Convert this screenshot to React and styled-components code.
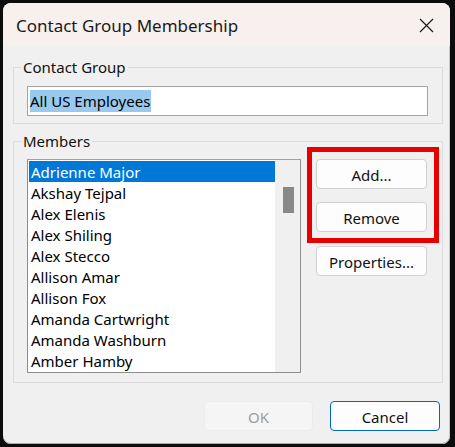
import React from 'react';
import styled, { createGlobalStyle } from 'styled-components';

const Global = createGlobalStyle`
  html, body {
    margin: 0;
    padding: 0;
    background: #0c0c0c;
  }
  body {
    font-family: "Noto Sans", "Open Sans", sans-serif;
    font-size: 15px;
    color: #000;
  }
`;

const Screen = styled.div`
  width: 455px;
  height: 447px;
  padding: 3px;
  box-sizing: border-box;
`;

const Window = styled.div`
  width: 447px;
  height: 441px;
  background: #f0f0f0;
  border-radius: 8px;
  overflow: hidden;
  display: flex;
  flex-direction: column;
  box-shadow: inset 0 -1px 0 #a9a9a9, inset -1px 0 0 #c8c8c8;
`;

const TitleBar = styled.div`
  height: 43px;
  flex: none;
  background: #f8f0ee;
  display: flex;
  align-items: center;
  justify-content: space-between;
  padding: 0 16px 0 13px;
`;

const Title = styled.span`
  font-size: 17px;
  color: #1a1a1a;
  margin-top: 2px;
`;

const Body = styled.div`
  flex: 1;
  display: flex;
  flex-direction: column;
  padding: 11px 7px 0 10px;
`;

const Group = styled.fieldset`
  margin: ${p => p.$top || 0}px 0 0 0;
  border: 1px solid #dcdcdc;
  padding: ${p => p.$pad};
  min-width: 0;
`;

const Legend = styled.legend`
  margin-left: -6px;
  padding: 0 2px;
  line-height: 20px;
  font-size: 15px;
  color: #111;
`;

const NameField = styled.div`
  height: 30px;
  box-sizing: border-box;
  border: 1px solid #a4a4a4;
  background: #fff;
  padding: 2px 2px;
  display: flex;
  align-items: center;
`;

const Selected = styled.span`
  background: #99c9ef;
  line-height: 22px;
  padding-right: 1px;
`;

const MembersRow = styled.div`
  display: flex;
  gap: 15px;
  align-items: flex-start;
`;

const List = styled.div`
  width: 274px;
  height: 214px;
  box-sizing: border-box;
  border: 1px solid #8d8d8d;
  border-top-color: #a0a0a0;
  background: #fff;
  padding: 1px 0 1px 1px;
  display: flex;
`;

const Rows = styled.div`
  width: 246px;
  flex: none;
`;

const Row = styled.div`
  height: 21px;
  box-sizing: border-box;
  line-height: 21px;
  padding: 1px 0 0 2px;
  white-space: nowrap;
  background: ${p => (p.$active ? '#0078d7' : 'transparent')};
  color: ${p => (p.$active ? '#fff' : '#000')};
`;

const ScrollTrack = styled.div`
  flex: 1;
  background: #f0f0f0;
  margin: -1px 0 -1px 0;
  display: flex;
  justify-content: center;
  padding-top: 27px;
`;

const Thumb = styled.div`
  width: 11px;
  height: 26px;
  background: #888;
  margin-left: 1px;
`;

const ButtonColumn = styled.div`
  position: relative;
  display: flex;
  flex-direction: column;
  gap: 13px;
  padding-top: 8px;
`;

const Button = styled.button`
  width: ${p => p.$w || 111}px;
  height: 30px;
  box-sizing: border-box;
  border-radius: 4px;
  border: 1px solid ${p => (p.$focus ? '#0067c0' : p.$disabled ? '#ebebeb' : '#d0d0d0')};
  background: ${p => (p.$disabled ? '#f5f5f5' : '#fdfdfd')};
  color: ${p => (p.$disabled ? '#9d9d9d' : '#111')};
  font-family: inherit;
  font-size: 15px;
  padding: 2px 0 0 0;
  margin-top: ${p => p.$mt || 0}px;
`;

const Highlight = styled.div`
  position: absolute;
  left: -9px;
  top: -4px;
  width: 132px;
  height: 96px;
  box-sizing: border-box;
  border: 5px solid #e80000;
  pointer-events: none;
`;

const Footer = styled.div`
  display: flex;
  justify-content: flex-end;
  gap: 17px;
  padding: 18px 3px 0 0;
`;

const CloseIcon = () => (
  <svg width="15" height="15" viewBox="0 0 15 15" style={{ marginTop: 2 }}>
    <path d="M1 1 L14 14 M14 1 L1 14" stroke="#1a1a1a" strokeWidth="1.2" fill="none" />
  </svg>
);

const members = [
  'Adrienne Major',
  'Akshay Tejpal',
  'Alex Elenis',
  'Alex Shiling',
  'Alex Stecco',
  'Allison Amar',
  'Allison Fox',
  'Amanda Cartwright',
  'Amanda Washburn',
  'Amber Hamby',
];

export default function App() {
  return (
    <Screen>
      <Global />
      <Window>
        <TitleBar>
          <Title>Contact Group Membership</Title>
          <CloseIcon />
        </TitleBar>
        <Body>
          <Group $pad="9px 14px 7px 13px">
            <Legend>Contact Group</Legend>
            <NameField>
              <Selected>All US Employees</Selected>
            </NameField>
          </Group>
          <Group $top={7} $pad="0 14px 9px 13px">
            <Legend>Members</Legend>
            <MembersRow>
              <List style={{ marginTop: 8 }}>
                <Rows>
                  {members.map((m, i) => (
                    <Row key={m} $active={i === 0}>{m}</Row>
                  ))}
                </Rows>
                <ScrollTrack>
                  <Thumb />
                </ScrollTrack>
              </List>
              <ButtonColumn>
                <Button>Add...</Button>
                <Button>Remove</Button>
                <Button $mt={1}>Properties...</Button>
                <Highlight />
              </ButtonColumn>
            </MembersRow>
          </Group>
          <Footer>
            <Button $w={109} $disabled>OK</Button>
            <Button $w={110} $focus>Cancel</Button>
          </Footer>
        </Body>
      </Window>
    </Screen>
  );
}
